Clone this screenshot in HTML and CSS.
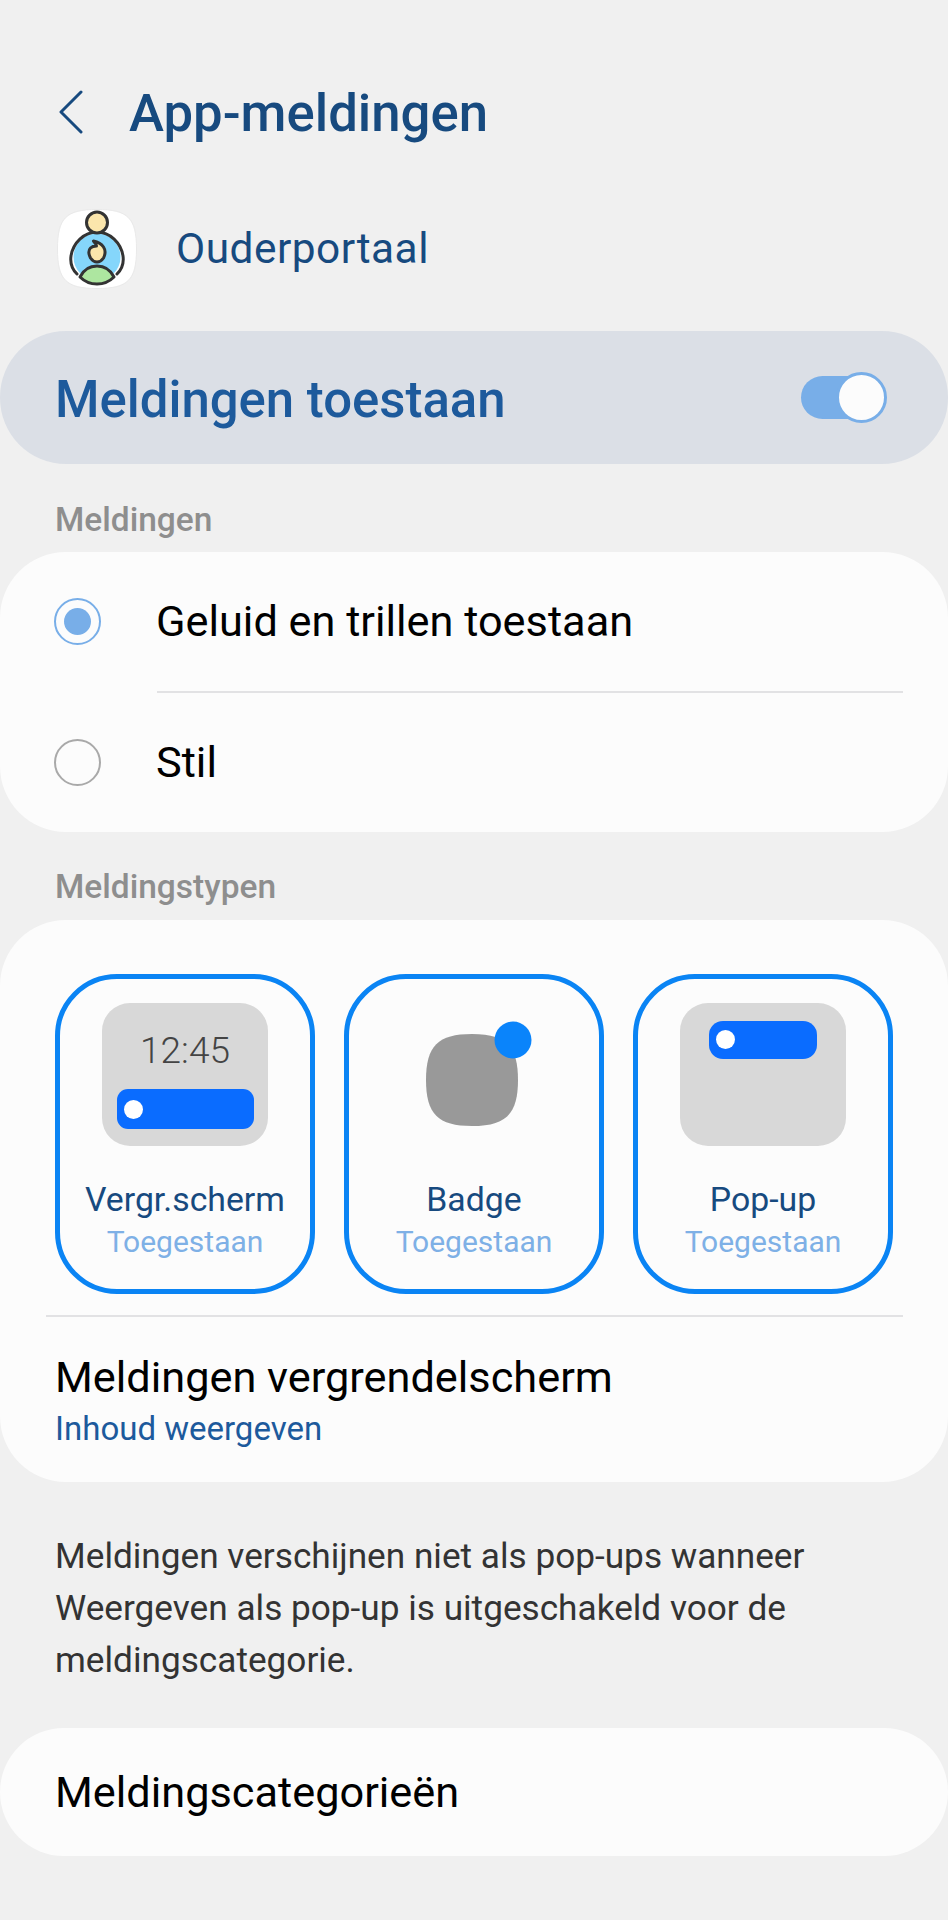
FILE: index.html
```html
<!DOCTYPE html>
<html lang="nl">
<head>
<meta charset="utf-8">
<title>App-meldingen</title>
<link rel="stylesheet" href="styles.css">
</head>
<body>
<header class="header">
  <svg class="back" width="26" height="44" viewBox="0 0 26 44"><path d="M23 2 L3 22 L23 42" fill="none" stroke="#174a7f" stroke-width="3" stroke-linecap="round" stroke-linejoin="round"/></svg>
  <h1 class="title">App-meldingen</h1>
</header>
<div class="app">
  <svg class="app-icon" width="80" height="80" viewBox="0 0 80 80">
    <path d="M40 0.500C71 0.500 79.500 9 79.500 40S71 79.500 40 79.500 0.500 71 0.500 40 9 0.500 40 0.500Z" fill="#fff" stroke="#e9e9e9"/>
    <circle cx="40" cy="48" r="23.500" fill="#85d6fb"/>
    <path d="M20 65C15 60 13 54 14 47C16 34 27 23 40 23C53 23 64 34 66 47C67 54 65 60 60 65" fill="none" stroke="#333" stroke-width="3" stroke-linecap="round"/>
    <circle cx="40" cy="13.500" r="10.500" fill="#fbe6ac" stroke="#333" stroke-width="3"/>
    <path d="M36.500 32C41.500 33 44.500 35 46.500 38C48.500 41 48.500 45 46.500 49C44.500 52 42.500 53 40 53C37.500 53 35.500 52 33.500 49C31.500 45 31.500 41 33.500 39C35.500 37 37.500 37 39.500 37C39.500 35 37.500 34 36.500 32Z" fill="#fbe6ac" stroke="#333" stroke-width="3" stroke-linejoin="round"/>
    <path d="M23 68C27 60 33 57 40 57C47 57 53 60 57 68C52 73 46 75 40 75C34 75 28 73 23 68Z" fill="#ade6a0" stroke="#333" stroke-width="3" stroke-linejoin="round"/>
  </svg>
  <span class="app-name">Ouderportaal</span>
</div>
<section class="master">
  <span class="master-label">Meldingen toestaan</span>
  <span class="toggle"><span class="thumb"></span></span>
</section>
<h2 class="section-label">Meldingen</h2>
<section class="card radios">
  <div class="radio-row">
    <span class="radio on"><span class="dot"></span></span>
    <span class="row-text">Geluid en trillen toestaan</span>
  </div>
  <div class="divider inset"></div>
  <div class="radio-row">
    <span class="radio"></span>
    <span class="row-text">Stil</span>
  </div>
</section>
<h2 class="section-label second">Meldingstypen</h2>
<section class="card types">
  <div class="tiles">
    <div class="tile">
      <div class="preview">
        <span class="clock">12:45</span>
        <span class="pill low"><span class="pill-dot"></span></span>
      </div>
      <div class="tile-name">Vergr.scherm</div>
      <div class="tile-state">Toegestaan</div>
    </div>
    <div class="tile">
      <div class="badge-wrap">
        <svg width="110" height="110" viewBox="0 0 110 110">
          <path d="M46 18C80 18 92 30 92 64S80 110 46 110 0 98 0 64 12 18 46 18Z" fill="#999"/>
          <circle cx="87" cy="24" r="18.500" fill="#0a84fb"/>
        </svg>
      </div>
      <div class="tile-name">Badge</div>
      <div class="tile-state">Toegestaan</div>
    </div>
    <div class="tile">
      <div class="preview top">
        <span class="pill high"><span class="pill-dot"></span></span>
      </div>
      <div class="tile-name">Pop-up</div>
      <div class="tile-state">Toegestaan</div>
    </div>
  </div>
  <div class="divider wide"></div>
  <div class="lock-row">
    <div class="row-text">Meldingen vergrendelscherm</div>
    <div class="lock-sub">Inhoud weergeven</div>
  </div>
</section>
<p class="note">Meldingen verschijnen niet als pop-ups wanneer Weergeven als pop-up is uitgeschakeld voor de meldingscategorie.</p>
<section class="card categories">
  <span class="row-text">Meldingscategorieën</span>
</section>
</body>
</html>
```
FILE: styles.css
```css
* { box-sizing: border-box; }
html, body { margin: 0; padding: 0; }
body {
  width: 948px;
  height: 1920px;
  overflow: hidden;
  background: #f0f0f0;
  font-family: Roboto, "Liberation Sans", sans-serif;
  color: #000;
}
.header {
  display: flex;
  align-items: center;
  height: 46px;
  margin-top: 89px;
  padding-left: 58px;
}
.back { flex: none; }
.title {
  margin: 2px 0 0 45px;
  font-size: 52.700px;
  line-height: 46px;
  font-weight: 500;
  color: #174a7f;
}
.app {
  display: flex;
  align-items: center;
  height: 78px;
  margin-top: 75px;
  padding-left: 57px;
}
.app-icon { flex: none; }
.app-name {
  margin: -2px 0 0 39px;
  font-size: 42.400px;
  letter-spacing: 0.5px;
  color: #174a7f;
}
.master {
  display: flex;
  align-items: center;
  justify-content: space-between;
  height: 133px;
  margin-top: 43px;
  padding: 0 62px 0 55px;
  background: #dbdfe6;
  border-radius: 66px;
}
.master-label {
  margin-top: 4px;
  font-size: 50.900px;
  font-weight: 500;
  color: #1d5a9c;
}
.toggle {
  position: relative;
  display: block;
  width: 85px;
  height: 43px;
  border-radius: 22px;
  background: #78aee8;
}
.thumb {
  position: absolute;
  right: -1px;
  top: -4px;
  width: 51px;
  height: 51px;
  border-radius: 50%;
  background: #fcfcfc;
  border: 3px solid #78aee8;
}
.section-label {
  display: flex;
  align-items: center;
  height: 88px;
  margin: 0;
  padding: 22px 0 0 55px;
  font-size: 33.500px;
  font-weight: 500;
  color: #8e8e8e;
}
.section-label.second { padding-top: 20px; }
.card {
  background: #fcfcfc;
  border-radius: 66px;
}
.radios {
  display: flex;
  flex-direction: column;
  height: 280px;
}
.radio-row {
  display: flex;
  align-items: center;
  flex: 1;
  padding-left: 54px;
}
.radio {
  display: flex;
  align-items: center;
  justify-content: center;
  flex: none;
  width: 47px;
  height: 47px;
  margin-right: 55px;
  border-radius: 50%;
  border: 2.500px solid #a9a9a9;
}
.radio.on { border-color: #78aee8; }
.dot {
  width: 27px;
  height: 27px;
  border-radius: 50%;
  background: #78aee8;
}
.row-text {
  font-size: 43.300px;
  line-height: 48px;
  color: #000;
}
.divider {
  flex: none;
  height: 2px;
  background: #e2e2e4;
}
.divider.inset { margin: 0 45px 0 157px; }
.divider.wide { margin: 21px 45px 0 46px; }
.types {
  height: 562px;
  padding-top: 54px;
}
.tiles {
  display: grid;
  grid-template-columns: repeat(3, 260px);
  column-gap: 29px;
  padding-left: 55px;
}
.tile {
  display: flex;
  flex-direction: column;
  align-items: center;
  height: 320px;
  padding-top: 24px;
  border: 5px solid #0a84f4;
  border-radius: 62px;
}
.preview {
  display: flex;
  flex-direction: column;
  align-items: center;
  width: 166px;
  height: 143px;
  border-radius: 28px;
  background: #d8d8d8;
}
.preview.top { padding-top: 18px; }
.clock {
  margin-top: 28px;
  font-size: 37px;
  line-height: 40px;
  font-weight: 300;
  color: #444;
}
.pill {
  display: flex;
  align-items: center;
  margin-top: 18px;
  padding-left: 7px;
  background: #0a6cff;
}
.pill.low {
  width: 137px;
  height: 40px;
  border-radius: 11px;
}
.pill.high {
  margin-top: 0;
  width: 108px;
  height: 37.500px;
  border-radius: 14px;
}
.pill-dot {
  width: 19px;
  height: 19px;
  border-radius: 50%;
  background: #fff;
}
.badge-wrap {
  display: flex;
  align-items: flex-start;
  justify-content: center;
  width: 166px;
  height: 143px;
  padding: 13px 0 0 13px;
}
.tile-name {
  margin-top: 35px;
  font-size: 33.800px;
  line-height: 38px;
  color: #174a7f;
}
.tile-state {
  margin-top: 6px;
  font-size: 30px;
  line-height: 34px;
  color: #7eb0e6;
}
.lock-row { padding: 37px 0 0 55px; }
.lock-sub {
  margin-top: 9px;
  font-size: 33px;
  line-height: 36px;
  color: #1d5a9c;
}
.note {
  margin: 0;
  padding: 48px 55px 0;
  height: 246px;
  font-size: 35.200px;
  line-height: 52px;
  color: #333;
}
.categories {
  display: flex;
  align-items: center;
  height: 128px;
  padding: 2px 0 0 55px;
}
```
